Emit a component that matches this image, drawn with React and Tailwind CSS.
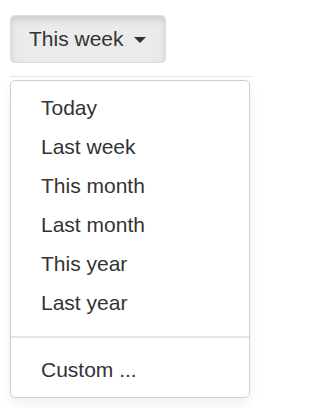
export default function App() {
  const items = ["Today", "Last week", "This month", "Last month", "This year", "Last year"];

  return (
    <div
      className="w-[261px] h-[408px] bg-white pt-[15px] pl-[10px] text-[#333]"
      style={{ fontFamily: '"Liberation Sans", Arial, sans-serif' }}
    >
      <button className="flex items-center w-[156px] h-[48px] pl-[18px] bg-[#ebebeb] border border-[#dcdcdc] rounded-[5px] shadow-[inset_0_4px_7px_rgba(0,0,0,0.125)] text-[21px] text-[#333]">
        This week
        <span className="ml-[10px] mt-[2px] w-0 h-0 border-t-[6px] border-t-[#333] border-x-[6px] border-x-transparent" />
      </button>

      <div className="mt-[13px] w-[242px] h-px bg-[#e5e5e5]" />

      <div className="mt-[3px] w-[240px] py-[7.5px] bg-white border border-[#cfcfcf] rounded-[5px] shadow-[0_6px_12px_rgba(0,0,0,0.06)]">
        {items.map((item) => (
          <div key={item} className="px-[30px] py-[4.5px] text-[21px] leading-[30px]">
            {item}
          </div>
        ))}
        <div className="my-[13px] h-[2px] bg-[#e5e5e5]" />
        <div className="px-[30px] py-[4.5px] text-[21px] leading-[30px]">Custom ...</div>
      </div>
    </div>
  );
}
